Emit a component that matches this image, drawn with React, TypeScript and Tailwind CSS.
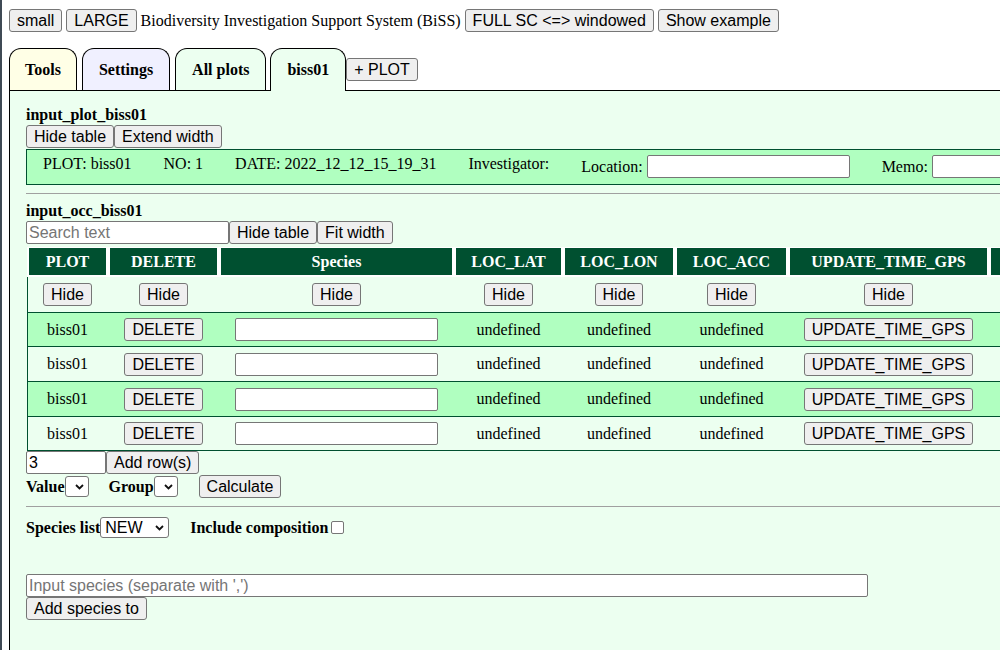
import React from "react";

const sans = "font-['Liberation_Sans',Arial,sans-serif]";
const serif = "font-['Liberation_Serif','Times_New_Roman',serif]";

function Btn({ children, className = "" }: { children: React.ReactNode; className?: string }) {
  return (
    <button
      className={`h-[23px] shrink-0 px-[7px] bg-[#efefef] border border-[#767676] rounded-[3px] ${sans} text-[16px] leading-[19px] font-normal text-black whitespace-nowrap ${className}`}
    >
      {children}
    </button>
  );
}

function TextInput({ w, placeholder, value }: { w: string; placeholder?: string; value?: string }) {
  return (
    <input
      type="text"
      placeholder={placeholder}
      defaultValue={value}
      className={`${w} h-[23px] shrink-0 px-[2px] bg-white border border-[#767676] rounded-[2px] ${sans} text-[16px] font-normal text-black placeholder:text-[#757575] outline-none`}
    />
  );
}

function Select({ w, label }: { w: string; label?: string }) {
  return (
    <span className={`relative inline-flex ${w} h-[21px] shrink-0`}>
      <select
        className={`appearance-none w-full h-full pl-[4px] bg-white border border-[#767676] rounded-[3px] ${sans} text-[16px] leading-[19px] font-normal text-black outline-none`}
      >
        {label ? <option>{label}</option> : <option></option>}
      </select>
      <svg
        className="absolute right-[5px] top-[8px] pointer-events-none"
        width="9"
        height="6"
        viewBox="0 0 9 6"
      >
        <path d="M1 1 L4.5 4.5 L8 1" fill="none" stroke="#111" strokeWidth="1.8" />
      </svg>
    </span>
  );
}

const cols = "grid grid-cols-[77px_107px_231px_105px_108px_109px_197px_120px] gap-x-[4px]";
const headers = ["PLOT", "DELETE", "Species", "LOC_LAT", "LOC_LON", "LOC_ACC", "UPDATE_TIME_GPS", ""];

function DataRow({ green, h }: { green: boolean; h: string }) {
  return (
    <div
      className={`${cols} ${h} items-center border-t border-[#005030] pl-[1px] ${green ? "bg-[#b0ffc0]" : ""}`}
    >
      <div className="text-center">biss01</div>
      <div className="flex justify-center">
        <Btn>DELETE</Btn>
      </div>
      <div className="flex justify-center">
        <TextInput w="w-[203px]" />
      </div>
      <div className="text-center">undefined</div>
      <div className="text-center">undefined</div>
      <div className="text-center">undefined</div>
      <div className="flex justify-center">
        <Btn>UPDATE_TIME_GPS</Btn>
      </div>
      <div />
    </div>
  );
}

export default function App() {
  return (
    <div className={`w-[1000px] h-[650px] overflow-hidden border-l-2 border-[#3f4a55] bg-white ${serif} text-[16px] leading-[18px] text-black`}>
      <div className="pt-[9px] pl-[7px]">
        {/* top bar */}
        <div className="flex items-center gap-[4px] h-[23px] whitespace-nowrap">
          <Btn>small</Btn>
          <Btn>LARGE</Btn>
          <span>Biodiversity Investigation Support System (BiSS)</span>
          <Btn>FULL SC &lt;=&gt; windowed</Btn>
          <Btn>Show example</Btn>
        </div>

        {/* tabs */}
        <div className="mt-[16px] flex items-end h-[42px] font-bold">
          <div className="h-[42px] flex items-center px-[15px] border border-b-0 border-black rounded-t-[12px] bg-[#ffffe6]">
            Tools
          </div>
          <div className="ml-[5px] h-[42px] flex items-center px-[16px] border border-b-0 border-black rounded-t-[12px] bg-[#f0f0ff]">
            Settings
          </div>
          <div className="ml-[5px] h-[42px] flex items-center px-[16px] border border-b-0 border-black rounded-t-[12px] bg-[#ecfff0]">
            All plots
          </div>
          <div className="relative z-10 ml-[4px] h-[43px] mb-[-1px] flex items-center pb-[1px] px-[16px] border border-b-0 border-black rounded-t-[12px] bg-[#ecfff0]">
            biss01
          </div>
          <div className="self-center">
            <Btn>+ PLOT</Btn>
          </div>
        </div>

        {/* panel */}
        <div className="border-t border-l border-black bg-[#ecfff0] min-h-[600px] pl-[16px] pt-[15px] w-[1200px]">
          <div className="font-bold">input_plot_biss01</div>
          <div className="mt-[1px] flex">
            <Btn>Hide table</Btn>
            <Btn>Extend width</Btn>
          </div>

          <div className="mt-[1px] h-[36px] border border-[#005030] bg-[#b0ffc0] flex items-start pt-[5px] pl-[16px] gap-[32px] whitespace-nowrap">
            <span>PLOT: biss01</span>
            <span>NO: 1</span>
            <span>DATE: 2022_12_12_15_19_31</span>
            <span>Investigator:</span>
            <span className="inline-flex items-baseline gap-[4px]">
              <span>Location:</span>
              <TextInput w="w-[203px]" />
            </span>
            <span className="inline-flex items-baseline gap-[4px]">
              <span>Memo:</span>
              <TextInput w="w-[203px]" />
            </span>
          </div>

          <div className="mt-[8px] border-t border-[#a0a0a0]" />

          <div className="mt-[8px] font-bold">input_occ_biss01</div>
          <div className="mt-[1px] flex">
            <TextInput w="w-[203px]" placeholder="Search text" />
            <Btn>Hide table</Btn>
            <Btn>Fit width</Btn>
          </div>

          {/* occurrence table */}
          <div className="mt-[3px] ml-[1px]">
            <div className={`${cols} bg-white pl-[2px] pt-[1px] pb-[2px]`}>
              {headers.map((h, i) => (
                <div
                  key={i}
                  className="h-[27px] flex items-center justify-center bg-[#005030] text-white font-bold"
                >
                  {h}
                </div>
              ))}
            </div>
            <div className="border-l border-b border-[#005030]">
              <div className={`${cols} h-[35px] items-center pl-[1px]`}>
                {headers.slice(0, 7).map((h) => (
                  <div key={h} className="flex justify-center">
                    <Btn>Hide</Btn>
                  </div>
                ))}
                <div />
              </div>
              <DataRow green h="h-[34px]" />
              <DataRow green={false} h="h-[35px]" />
              <DataRow green h="h-[35px]" />
              <DataRow green={false} h="h-[34px]" />
            </div>
          </div>

          <div className="flex">
            <TextInput w="w-[80px]" value="3" />
            <Btn>Add row(s)</Btn>
          </div>

          <div className="mt-[1px] flex items-center h-[23px] font-bold">
            <span>Value</span>
            <Select w="w-[24px]" />
            <span className="ml-[20px]">Group</span>
            <Select w="w-[24px]" />
            <span className="ml-[21px]">
              <Btn>Calculate</Btn>
            </span>
          </div>

          <div className="mt-[8px] border-t border-[#a0a0a0]" />

          <div className="mt-[10px] flex items-center h-[21px] font-bold">
            <span>Species list</span>
            <Select w="w-[69px]" label="NEW" />
            <span className="ml-[21px]">Include composition</span>
            <input
              type="checkbox"
              className="ml-[3px] appearance-none w-[13px] h-[13px] bg-white border border-[#767676] rounded-[2px]"
            />
          </div>

          <div className="mt-[36px]">
            <TextInput w="w-[842px]" placeholder="Input species (separate with ',')" />
          </div>
          <div>
            <Btn>Add species to</Btn>
          </div>
        </div>
      </div>
    </div>
  );
}
